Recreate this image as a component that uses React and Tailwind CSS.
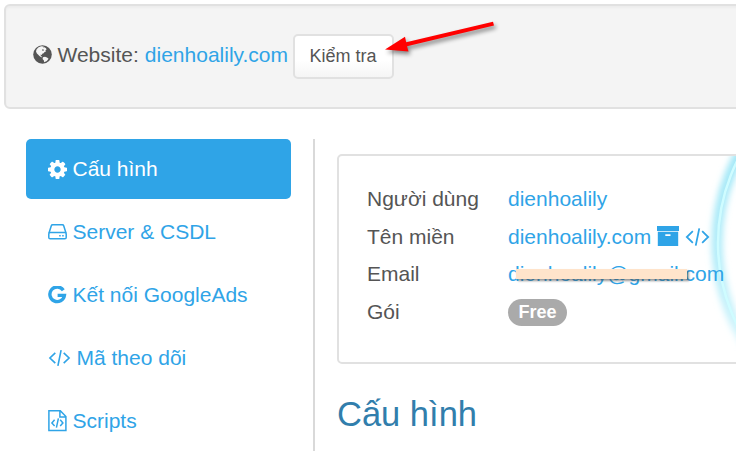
import React from "react";

function Globe() {
  return (
    <svg className="mt-[-4px] shrink-0" width="19" height="19" viewBox="0 0 19 19">
      <circle cx="9.5" cy="9.5" r="9.3" fill="#555" />
      <path d="M3.6 4.2 5.6 2.2 8.2 1.3 10.8 1.5 10.1 2.6 11.6 2.3 13 3.2 13.6 4.4 12.3 5.3 13.2 6.2 11.6 6.9 10.6 8.2 9.3 8.8 8.8 10 7.6 9.6 7.9 11.1 9.4 12 8.3 12.2 6.4 11.1 5 9.4 3.9 8.6 3 6.4Z" fill="#f4f4f4" />
      <path d="M9.9 12.2 12 11.8 14 12.6 15.6 13.8 13.8 16 11.2 17.3 10.9 15.5 9.6 13.9Z" fill="#f4f4f4" />
      <path d="M9 4.5 10.4 4.2 10.8 5.4 9.7 5.9Z" fill="#555" />
    </svg>
  );
}

function Gear() {
  return (
    <svg width="19" height="19" viewBox="0 128 1536 1536" fill="currentColor">
      <path fillRule="evenodd" d="M1024 896q0 -106 -75 -181t-181 -75t-181 75t-75 181t75 181t181 75t181 -75t75 -181zM1536 1005v-222q0 -12 -8 -23t-20 -13l-185 -28q-19 -54 -39 -91q35 -50 107 -138q10 -12 10 -25t-9 -23q-27 -37 -99 -108t-94 -71q-12 0 -26 9l-138 108q-44 -23 -91 -38q-16 -136 -29 -186q-7 -28 -36 -28h-222q-14 0 -24.5 8.5t-11.5 21.5l-28 184q-49 16 -90 37l-141 -107q-10 -9 -25 -9q-14 0 -25 11q-126 114 -165 168q-7 10 -7 23q0 12 8 23q15 21 51 66.5t54 70.5q-27 50 -41 99l-183 27q-13 2 -21 12.5t-8 23.5v222q0 12 8 23t19 13l186 28q14 46 39 92q-40 57 -107 138q-10 12 -10 24q0 10 9 23q26 36 98.5 107.5t94.5 71.5q13 0 26 -10l138 -107q44 23 91 38q16 136 29 186q7 28 36 28h222q14 0 24.5 -8.5t11.5 -21.5l28 -184q49 -16 90 -37l142 107q9 9 24 9q13 0 25 -10q129 -119 165 -170q7 -8 7 -22q0 -12 -8 -23q-15 -21 -51 -66.5t-54 -70.5q26 -50 41 -98l183 -28q13 -2 21 -12.5t8 -23.5z" />
    </svg>
  );
}

function Drive() {
  return (
    <svg width="19" height="16" viewBox="0 0 19 16" fill="none" stroke="currentColor" strokeWidth="1.5">
      <path d="M1 9 3.3 1.7Q3.6.8 4.6.8h9.8q1 0 1.3.9L18 9" />
      <rect x=".8" y="8.4" width="17.4" height="6.4" rx="1.4" />
      <path d="M11.2 11.7h1.5M14.2 11.7h1.5" strokeWidth="1.5" />
    </svg>
  );
}

function GoogleMark() {
  return (
    <svg width="19" height="19" viewBox="0 0 19 19" fill="none" stroke="currentColor" strokeWidth="3.4">
      <path d="M15.3 4.3A7.3 7.3 0 1 0 16.4 9.4H9.6" />
    </svg>
  );
}

function Code({ width = 22, height = 18 }) {
  return (
    <svg width={width} height={height} viewBox="0 0 22 18" fill="none" stroke="currentColor" strokeWidth="1.6">
      <path d="M6.8 3.8 1.4 9l5.4 5.2M15.2 3.8l5.4 5.2-5.4 5.2M12.6 1.2 9.4 16.8" />
    </svg>
  );
}

function FileCode() {
  return (
    <svg width="19" height="22" viewBox="0 0 19 22" fill="none" stroke="currentColor" strokeWidth="1.5">
      <path d="M.9.8h11.4l5.6 5.7v14.1H.9zM11.9.8v6.1h6" />
      <path d="M6.6 9.8 3.9 12.9l2.7 3.1M12.2 9.8l2.7 3.1-2.7 3.1M10.4 8.3 8.4 17.6" />
    </svg>
  );
}

function Archive() {
  return (
    <svg width="22" height="20" viewBox="0 0 22 20" fill="currentColor">
      <path d="M0 0h22v5H0z" />
      <path fillRule="evenodd" d="M.8 5.8h20.4V20H.8zM8.3 8.2v1.7h5.2V8.2z" />
    </svg>
  );
}

function NavItem({ icon, label, active }) {
  return (
    <a className={active ? "flex h-[60px] items-center rounded-[5px] bg-[#2fa4e7] pl-[22px] text-white" : "flex h-[60px] items-center rounded-[5px] pl-[22px]"}>
      {icon}
      <span className="ml-[5.5px]">{label}</span>
    </a>
  );
}

function Row({ label, children }) {
  return (
    <div className="flex h-[37.6px] items-center">
      <div className="w-[141px]">{label}</div>
      <div className="flex items-center text-[#2fa4e7]">{children}</div>
    </div>
  );
}

export default function App() {
  return (
    <div className="relative h-[451px] w-[736px] overflow-hidden bg-white font-['Liberation_Sans',Arial,sans-serif] text-[21px] leading-[30px] whitespace-nowrap text-[#555]">
      <header className="mt-1 ml-1 flex h-[105px] w-[760px] items-center rounded-[6px] border-2 border-[#e1e1e1] bg-[#f4f4f4] pl-[27px] shadow-[inset_0_2px_2px_rgba(0,0,0,0.03)]">
        <Globe />
        <span className="mt-[-3px] ml-[5.5px]">Website:</span>
        <a className="mt-[-3px] ml-[6px] text-[#2fa4e7]">dienhoalily.com</a>
        <button className="ml-[4.5px] h-[45px] w-[101px] rounded-[5px] border-2 border-[#e1e1e1] bg-linear-to-b from-white from-60% to-[#f5f5f5] pb-[2px] text-[18px]">Kiểm tra</button>
      </header>

      <div className="mt-[30px] flex">
        <nav className="ml-[26px] flex w-[265px] shrink-0 flex-col gap-[3px] text-[#2fa4e7]">
          <NavItem active icon={<Gear />} label="Cấu hình" />
          <NavItem icon={<Drive />} label="Server & CSDL" />
          <NavItem icon={<GoogleMark />} label="Kết nối GoogleAds" />
          <NavItem icon={<Code width={23} />} label="Mã theo dõi" />
          <NavItem icon={<FileCode />} label="Scripts" />
        </nav>
        <main className="ml-[22px] h-[330px] shrink-0 border-l-2 border-[#d9d9d9] pt-[15px] pl-[22px]">
          <section className="relative h-[210px] w-[440px] overflow-hidden rounded-[5px] border-2 border-[#e1e1e1] pt-[24.4px] pl-7">
            <svg className="absolute top-0 left-[361px]" width="36" height="206" viewBox="0 0 36 206">
              <defs>
                <linearGradient id="glow" x1="0" y1="0" x2="0" y2="206" gradientUnits="userSpaceOnUse">
                  <stop offset="0" stopColor="#a0e7f7" />
                  <stop offset=".5" stopColor="#b4edf9" />
                  <stop offset="1" stopColor="#dcf7fd" />
                </linearGradient>
                <filter id="soft" x="-20%" y="-20%" width="140%" height="140%">
                  <feGaussianBlur stdDeviation="3.2" />
                </filter>
              </defs>
              <circle cx="203" cy="87" r="186" fill="none" stroke="url(#glow)" strokeWidth="11" filter="url(#soft)" />
              <circle cx="203" cy="87" r="185" fill="none" stroke="#cffcff" strokeWidth="2.5" />
            </svg>
            <div className="relative">
              <Row label="Người dùng"><a>dienhoalily</a></Row>
              <Row label="Tên miền">
                <a>dienhoalily.com</a>
                <span className="mt-[-1px] ml-[6px]"><Archive /></span>
                <span className="ml-[6px]"><Code width={25} height={20} /></span>
              </Row>
              <Row label="Email">
                <a className="relative">
                  dienhoalily@gmail.com
                  <span className="absolute top-[10px] left-[8px] h-[10px] w-[171px] bg-[#ffe4cb] shadow-[2px_2px_2px_rgba(70,70,70,0.55)]" />
                </a>
              </Row>
              <Row label="Gói">
                <span className="mt-[2px] flex h-[27px] w-[59px] items-center justify-center rounded-full bg-[#aaa] pb-px text-[18px] font-bold text-white">Free</span>
              </Row>
            </div>
          </section>
          <h1 className="mt-[30px] text-[34.5px] leading-[40px] text-[#317eac]">Cấu hình</h1>
        </main>
      </div>

      <svg className="absolute top-[14px] left-[378px]" width="126" height="48" viewBox="378 14 126 48">
        <g className="drop-shadow-[2px_3px_2px_rgba(0,0,0,0.45)]" fill="#f00">
          <path d="M493 21.8 494 25.6 407 46.2 408.5 51.5 385 49.5 405 36.8 406.2 42.2Z" />
        </g>
      </svg>
    </div>
  );
}
